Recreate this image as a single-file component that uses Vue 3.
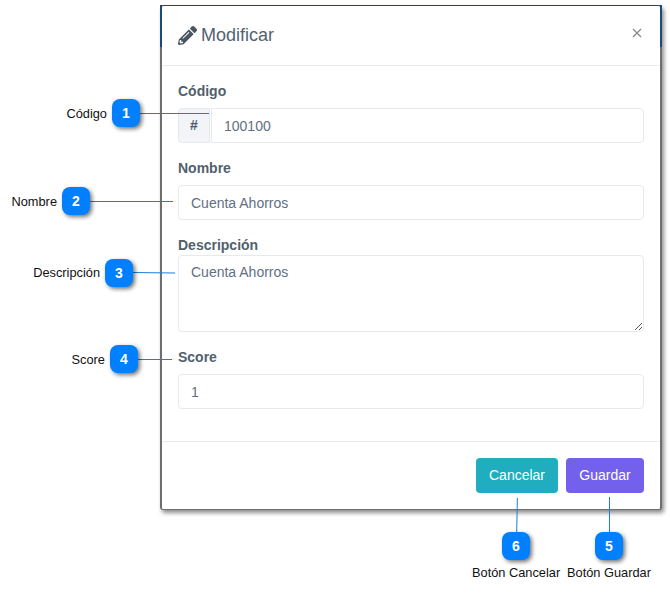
<script setup>
const rows = [
  { label: 'Nombre', value: 'Cuenta Ahorros' },
]
</script>

<template>
  <div class="page">
    <div class="modal">
      <header class="head">
        <h1 class="title">
          <svg class="pencil" viewBox="0 0 512 512" aria-hidden="true"><path fill="currentColor" d="M497.9 142.1l-46.1 46.1c-4.7 4.7-12.3 4.7-17 0l-111-111c-4.7-4.7-4.7-12.3 0-17l46.1-46.1c18.7-18.7 49.1-18.7 67.9 0l60.1 60.1c18.8 18.7 18.8 49.1 0 67.9zM284.2 99.8L21.6 362.4.4 483.9c-2.9 16.4 11.4 30.6 27.8 27.8l121.5-21.3 262.6-262.6c4.7-4.7 4.7-12.3 0-17l-111-111c-4.8-4.7-12.4-4.7-17.1 0zM124.1 339.9c-5.5-5.5-5.5-14.3 0-19.8l154-154c5.5-5.5 14.3-5.5 19.8 0s5.5 14.3 0 19.8l-154 154c-5.5 5.5-14.3 5.5-19.8 0zM88 424h48v36.3l-64.5 11.3-31.1-31.1L51.7 376H88v48z"/></svg>
          <span>Modificar</span>
        </h1>
        <svg class="close" viewBox="0 0 10 10" aria-hidden="true"><path d="M1 1l8 8M9 1l-8 8" stroke="currentColor" stroke-width="1.3" fill="none"/></svg>
      </header>
      <div class="body">
        <div class="field f-code">
          <label class="label">Código</label>
          <div class="group">
            <span class="addon">#</span>
            <div class="input joined">100100</div>
          </div>
        </div>
        <div v-for="r in rows" :key="r.label" class="field f-rest">
          <label class="label">{{ r.label }}</label>
          <div class="input">{{ r.value }}</div>
        </div>
        <div class="field f-rest">
          <label class="label tight">Descripción</label>
          <div class="input area">
            Cuenta Ahorros
            <svg class="grip" viewBox="0 0 10 10" aria-hidden="true"><path d="M9 2L2 9M9 6L6 9" stroke="#555" stroke-width="1" fill="none"/></svg>
          </div>
        </div>
        <div class="field f-rest">
          <label class="label">Score</label>
          <div class="input">1</div>
        </div>
      </div>
      <footer class="foot">
        <button class="btn cancel" type="button">Cancelar</button>
        <button class="btn save" type="button">Guardar</button>
      </footer>
    </div>

    <svg class="lines" width="670" height="597" aria-hidden="true">
      <path d="M140 113.5H209M90 201.5H173M133 272.5L175 273M138 359.5H172M517.4 498L516.7 532M609.5 497V532" stroke="#1a7fdc" stroke-width="1" fill="none"/>
    </svg>

    <span class="tag t1">Código</span><span class="dot d1">1</span>
    <span class="tag t2">Nombre</span><span class="dot d2">2</span>
    <span class="tag t3">Descripción</span><span class="dot d3">3</span>
    <span class="tag t4">Score</span><span class="dot d4">4</span>
    <span class="dot d6">6</span><span class="tag t6">Botón Cancelar</span>
    <span class="dot d5">5</span><span class="tag t5">Botón Guardar</span>
  </div>
</template>

<style>
html, body { margin: 0; background: #fff; }
</style>

<style scoped>
.page {
  position: relative;
  width: 670px;
  height: 597px;
  overflow: hidden;
  padding: 5px 0 0 160px;
  box-sizing: border-box;
  font-family: "Liberation Sans", Arial, sans-serif;
  background: #fff;
}
.modal {
  position: relative;
  width: 502px;
  height: 505px;
  box-sizing: border-box;
  display: flex;
  flex-direction: column;
  background: #fff;
  border: 2px solid #6e6e6e;
  border-top: 1px solid #1b4a78;
  border-bottom-width: 1px;
  border-radius: 3px;
  box-shadow: 2px 3px 4px rgba(0, 0, 0, 0.45);
}
.modal::before,
.modal::after {
  content: "";
  position: absolute;
  top: -1px;
  width: 2px;
  height: 42px;
  background: #1b4a78;
}
.modal::before { left: -2px; }
.modal::after { right: -2px; }
.head {
  height: 60px;
  box-sizing: border-box;
  flex: none;
  display: flex;
  align-items: center;
  justify-content: space-between;
  padding: 0 18px 0 16px;
  border-bottom: 1px solid #e9ecef;
}
.title {
  margin: 0;
  display: flex;
  align-items: center;
  gap: 4px;
  font-size: 18px;
  font-weight: 400;
  color: #55626f;
}
.pencil { width: 19px; height: 19px; color: #4a5560; }
.close { width: 10px; height: 10px; color: #8a8a8a; margin-bottom: 6px; }
.body { flex: 1; padding: 0 16px; }
.field { display: flex; flex-direction: column; }
.f-code { padding-top: 17px; }
.f-rest { padding-top: 17px; }
.label {
  height: 17px;
  margin-bottom: 8px;
  font-size: 14px;
  line-height: 17px;
  font-weight: 700;
  color: #525f6c;
}
.label.tight { margin-bottom: 2px; height: 16px; line-height: 16px; }
.group { display: flex; }
.input {
  flex: none;
  height: 35px;
  box-sizing: border-box;
  padding: 1px 12px 0;
  line-height: 32px;
  font-size: 14px;
  color: #5f6f84;
  background: #fff;
  border: 1px solid #e6e9ee;
  border-radius: 4px;
}
.joined { flex: 1; border-radius: 0 4px 4px 0; margin-left: 1px; }
.addon {
  width: 32px;
  height: 35px;
  box-sizing: border-box;
  text-align: center;
  line-height: 33px;
  font-size: 14px;
  font-weight: 700;
  color: #4f5b68;
  background: #f2f4f8;
  border: 1px solid #e6e9ee;
  border-radius: 4px 0 0 4px;
}
.area {
  position: relative;
  height: 77px;
  line-height: 1.25;
  padding-top: 8px;
}
.grip { position: absolute; right: 0; bottom: 0; width: 10px; height: 10px; }
.foot {
  height: 68px;
  box-sizing: border-box;
  flex: none;
  display: flex;
  justify-content: flex-end;
  align-items: flex-start;
  gap: 8px;
  padding: 16px 16px 0;
  border-top: 1px solid #e9ecef;
}
.btn {
  height: 35px;
  padding: 0 0 1px;
  border: 0;
  border-radius: 4px;
  color: #fff;
  font: 14px "Liberation Sans", Arial, sans-serif;
}
.cancel { width: 82px; background: #1fadbf; }
.save { width: 78px; background: #7360ed; }
.lines { position: absolute; left: 0; top: 0; pointer-events: none; }
.tag {
  position: absolute;
  font-size: 12.8px;
  line-height: 16px;
  color: #111;
  white-space: nowrap;
}
.dot {
  position: absolute;
  width: 28px;
  height: 28px;
  border-radius: 8px;
  background: #007fff;
  color: #fff;
  font-size: 14px;
  font-weight: 700;
  line-height: 28px;
  text-align: center;
  box-shadow: 2px 2px 4px rgba(0, 0, 0, 0.55);
}
.d1 { left: 112px; top: 99px; }
.d2 { left: 62px; top: 187px; }
.d3 { left: 105px; top: 259px; }
.d4 { left: 110px; top: 345px; }
.d6 { left: 502px; top: 532px; }
.d5 { left: 595px; top: 532px; }
.t1 { right: 563px; top: 106px; }
.t2 { right: 613px; top: 194px; }
.t3 { right: 570px; top: 265px; }
.t4 { right: 565px; top: 352px; }
.t6 { left: 472px; top: 565px; }
.t5 { left: 567px; top: 565px; }
</style>
